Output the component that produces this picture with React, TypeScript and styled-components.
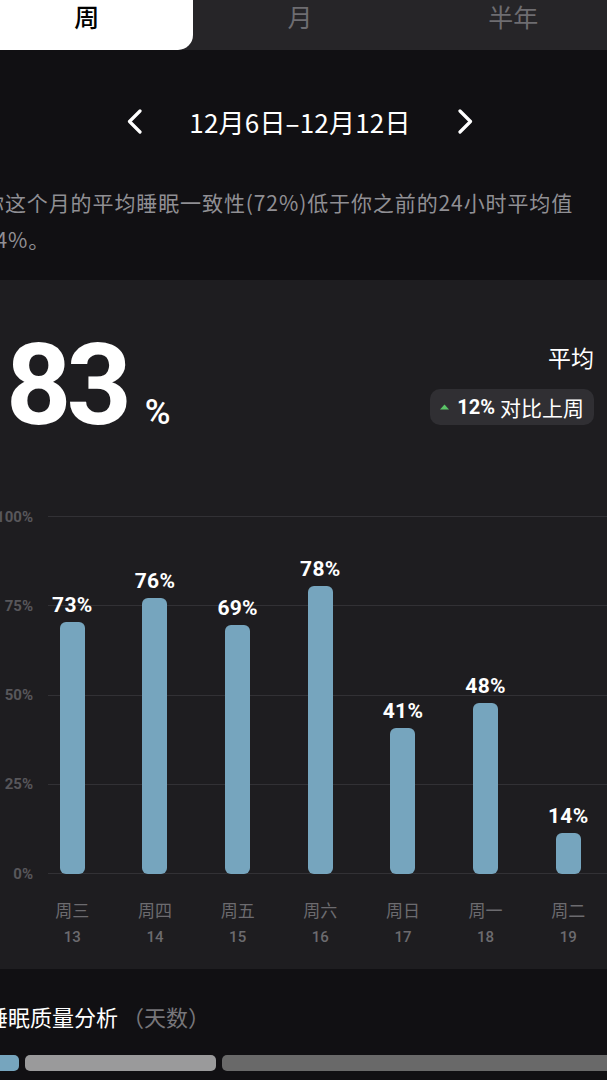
import React from "react";
import styled, { createGlobalStyle } from "styled-components";

const CJK = `"Noto Sans CJK SC", "Noto Sans", sans-serif`;
const NUM = `Roboto, "Noto Sans CJK SC", sans-serif`;

const Global = createGlobalStyle`
  html, body {
    margin: 0;
    padding: 0;
    background: #111013;
    overflow: hidden;
  }
  body { font-family: ${CJK}; }
`;

const Page = styled.div`
  width: 640px;
  margin-left: -20px;
  height: 1080px;
  background: #111013;
  display: flex;
  flex-direction: column;
`;

const TabBar = styled.div`
  height: 50px;
  background: #262528;
  display: grid;
  grid-template-columns: repeat(3, 1fr);
`;

const Tab = styled.div<{ $active?: boolean }>`
  display: flex;
  justify-content: center;
  align-items: flex-start;
  padding-top: 2px;
  font-size: 25px;
  line-height: 28px;
  font-weight: ${(p) => (p.$active ? 500 : 400)};
  color: ${(p) => (p.$active ? "#000" : "#6e6d71")};
  background: ${(p) => (p.$active ? "#fff" : "transparent")};
  border-radius: 0 0 15px 15px;
`;

const DateNav = styled.div`
  margin-top: 41px;
  height: 60px;
  display: flex;
  justify-content: center;
  align-items: center;
  gap: 47px;
`;

const DateText = styled.div`
  font-size: 26px;
  color: #fff;
  letter-spacing: 0.2px;
`;

const Chevron = styled.svg`
  width: 15px;
  height: 25px;
  display: block;
`;

const Description = styled.p`
  margin: 0;
  padding: 33px 30px 22px 3px;
  font-size: 21px;
  line-height: 37px;
  letter-spacing: 0.9px;
  color: #908f94;
`;

const Card = styled.section`
  background: #1e1d20;
  padding: 48px 0 21px;
  display: flex;
  flex-direction: column;
`;

const Header = styled.div`
  display: flex;
  justify-content: space-between;
  align-items: flex-start;
  padding: 0 26px 0 26px;
`;

const BigValue = styled.div`
  display: flex;
  align-items: baseline;
  font-family: ${NUM};
  color: #fff;
`;

const BigNumber = styled.span`
  font-size: 114px;
  line-height: 1;
  font-weight: 700;
  letter-spacing: -5px;
`;

const BigUnit = styled.span`
  font-size: 35px;
  font-weight: 500;
  margin-left: 18px;
`;

const Summary = styled.div`
  display: flex;
  flex-direction: column;
  align-items: flex-end;
  padding-top: 14px;
  gap: 17px;
`;

const SummaryTitle = styled.div`
  font-size: 23px;
  line-height: 30px;
  color: #fff;
`;

const Badge = styled.div`
  height: 36px;
  display: flex;
  align-items: center;
  gap: 8px;
  padding: 0 10px 0 10px;
  background: #302f33;
  border-radius: 10px;
  color: #fff;
`;

const BadgeNum = styled.span`
  font-family: ${NUM};
  font-weight: 700;
  font-size: 20px;
`;

const BadgeText = styled.span`
  font-size: 21px;
  margin-left: -3px;
`;

const Plot = styled.div`
  position: relative;
  margin-top: 74px;
  height: 358px;
`;

const GridLayer = styled.div`
  position: absolute;
  inset: 0;
  display: flex;
  flex-direction: column;
  justify-content: space-between;
`;

const GridRow = styled.div`
  height: 1px;
  display: flex;
  align-items: center;
`;

const AxisLabel = styled.span`
  width: 53px;
  text-align: right;
  font-family: ${NUM};
  font-weight: 700;
  font-size: 15px;
  line-height: 0;
  color: #58575b;
`;

const GridLine = styled.div`
  flex: 1;
  height: 1px;
  margin-left: 15px;
  background: #323135;
`;

const Columns = styled.div`
  position: relative;
  height: 100%;
  display: flex;
  padding-left: 51px;
`;

const Column = styled.div`
  flex: 0 0 82.67px;
  display: flex;
  flex-direction: column;
  justify-content: flex-end;
  align-items: center;
`;

const ValueLabel = styled.span`
  font-family: ${NUM};
  font-weight: 700;
  font-size: 21px;
  line-height: 1;
  letter-spacing: 0.3px;
  color: #fff;
  margin-bottom: 6px;
`;

const Bar = styled.div`
  width: 25px;
  border-radius: 6px;
  background: #76a5be;
`;

const AxisRow = styled.div`
  display: flex;
  padding-left: 51px;
  margin-top: 24px;
`;

const AxisCell = styled.div`
  flex: 0 0 82.67px;
  display: flex;
  flex-direction: column;
  align-items: center;
  gap: 4px;
  color: #6c6b6f;
`;

const DayName = styled.span`
  font-size: 17px;
  line-height: 24px;
`;

const DayNum = styled.span`
  font-family: ${NUM};
  font-weight: 500;
  font-size: 15px;
  line-height: 22px;
`;

const SectionTitle = styled.h2`
  margin: 32px 0 0;
  padding-left: 6px;
  font-size: 22px;
  line-height: 30px;
  font-weight: 400;
  color: #fff;
`;

const Muted = styled.span`
  color: #77767a;
  margin-left: 4px;
`;

const Segments = styled.div`
  margin-top: 24px;
  display: flex;
  gap: 6px;
  padding-left: 6px;
`;

const Segment = styled.div<{ $color: string; $w?: number }>`
  height: 16px;
  border-radius: 5px;
  background: ${(p) => p.$color};
  ${(p) => (p.$w ? `flex: 0 0 ${p.$w}px;` : "flex: 1;")}
`;

const days = [
  { name: "周三", num: 13, value: 73, h: 252 },
  { name: "周四", num: 14, value: 76, h: 276 },
  { name: "周五", num: 15, value: 69, h: 249 },
  { name: "周六", num: 16, value: 78, h: 288 },
  { name: "周日", num: 17, value: 41, h: 146 },
  { name: "周一", num: 18, value: 48, h: 171 },
  { name: "周二", num: 19, value: 14, h: 41 },
];

const axis = ["100%", "75%", "50%", "25%", "0%"];

export default function App() {
  return (
    <>
      <Global />
      <Page>
        <TabBar>
          <Tab $active>周</Tab>
          <Tab>月</Tab>
          <Tab>半年</Tab>
        </TabBar>

        <DateNav>
          <Chevron viewBox="0 0 15 25">
            <polyline points="13,2 2.5,12.5 13,23" fill="none" stroke="#fff" strokeWidth="3.2" strokeLinecap="round" strokeLinejoin="round" />
          </Chevron>
          <DateText>12月6日–12月12日</DateText>
          <Chevron viewBox="0 0 15 25">
            <polyline points="2,2 12.5,12.5 2,23" fill="none" stroke="#fff" strokeWidth="3.2" strokeLinecap="round" strokeLinejoin="round" />
          </Chevron>
        </DateNav>

        <Description>你这个月的平均睡眠一致性(72%)低于你之前的24小时平均值84%。</Description>

        <Card>
          <Header>
            <BigValue>
              <BigNumber>83</BigNumber>
              <BigUnit>%</BigUnit>
            </BigValue>
            <Summary>
              <SummaryTitle>平均</SummaryTitle>
              <Badge>
                <svg width="9" height="6" viewBox="0 0 9 6">
                  <polygon points="0,5.5 4.5,0.5 9,5.5" fill="#5ac467" />
                </svg>
                <BadgeNum>12%</BadgeNum>
                <BadgeText>对比上周</BadgeText>
              </Badge>
            </Summary>
          </Header>

          <Plot>
            <GridLayer>
              {axis.map((a) => (
                <GridRow key={a}>
                  <AxisLabel>{a}</AxisLabel>
                  <GridLine />
                </GridRow>
              ))}
            </GridLayer>
            <Columns>
              {days.map((d) => (
                <Column key={d.num}>
                  <ValueLabel>{d.value}%</ValueLabel>
                  <Bar style={{ height: d.h }} />
                </Column>
              ))}
            </Columns>
          </Plot>

          <AxisRow>
            {days.map((d) => (
              <AxisCell key={d.num}>
                <DayName>{d.name}</DayName>
                <DayNum>{d.num}</DayNum>
              </AxisCell>
            ))}
          </AxisRow>
        </Card>

        <SectionTitle>
          睡眠质量分析<Muted>（天数）</Muted>
        </SectionTitle>

        <Segments>
          <Segment $color="#76a5be" $w={33} />
          <Segment $color="#9a9a9b" $w={191} />
          <Segment $color="#696969" />
        </Segments>
      </Page>
    </>
  );
}
